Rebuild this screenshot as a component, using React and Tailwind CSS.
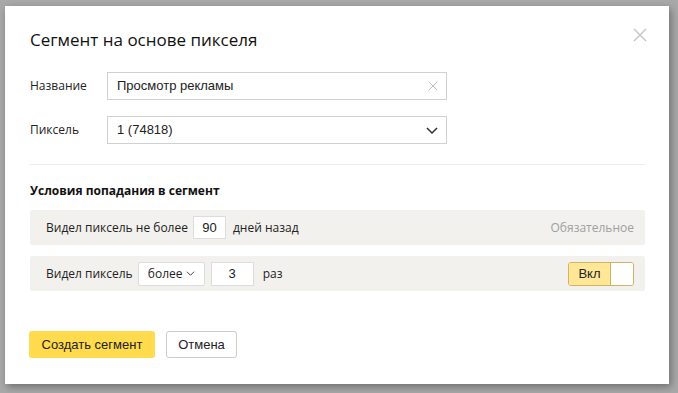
import React from "react";

const ui = { fontFamily: '"Open Sans", "Noto Sans", sans-serif' };
const ar = { fontFamily: '"Liberation Sans", Arial, sans-serif' };

function XIcon({ size = 14, color = "#bbb", sw = 1.3 }) {
  return (
    <svg width={size} height={size} viewBox="0 0 14 14">
      <path d="M1 1 L13 13 M13 1 L1 13" stroke={color} strokeWidth={sw} fill="none" />
    </svg>
  );
}

function Chevron({ w = 12, h = 7, color = "#333", sw = 1.5 }) {
  return (
    <svg width={w} height={h} viewBox="0 0 12 7">
      <path d="M1 1 L6 6 L11 1" stroke={color} strokeWidth={sw} fill="none" />
    </svg>
  );
}

export default function App() {
  return (
    <div className="w-[678px] h-[393px] bg-[#a9a9a9] pt-[6px] pl-[5px] overflow-hidden">
      <div className="w-[664px] h-[378px] bg-white shadow-[2px_3px_8px_rgba(0,0,0,0.35)] relative px-[25px] pt-[22px]" style={ui}>
        <div className="absolute right-[22px] top-[22px]">
          <XIcon size={14} color="#c4c4c4" sw={1.4} />
        </div>
        <div className="text-[17px] leading-[24px] text-[#111]">Сегмент на основе пикселя</div>

        <div className="flex items-center mt-[20px] h-[28px]">
          <div className="w-[77px] text-[12px] text-[#222]">Название</div>
          <div className="w-[340px] h-[28px] border border-[#d0d0d0] flex items-center pl-[9px] pr-[8px] text-[13px] text-[#222]" style={ar}>
            <span className="flex-1">Просмотр рекламы</span>
            <XIcon size={10} color="#b5b5b5" sw={1.2} />
          </div>
        </div>

        <div className="flex items-center mt-[16px] h-[28px]">
          <div className="w-[77px] text-[12px] text-[#222]">Пиксель</div>
          <div className="w-[340px] h-[28px] border border-[#d0d0d0] flex items-center pl-[9px] pr-[8px] text-[13px] text-[#222]" style={ar}>
            <span className="flex-1">1 (74818)</span>
            <Chevron w={12} h={7} color="#333" sw={1.5} />
          </div>
        </div>

        <div className="mt-[20px] h-px bg-[#ececec] w-[615px]" />

        <div className="mt-[17px] text-[12px] font-bold text-[#111] leading-[18px]">Условия попадания в сегмент</div>

        <div className="mt-[10px] w-[615px] h-[35px] bg-[#f2f1ee] rounded-[2px] flex items-center pl-[16px] pr-[11px] text-[12px] text-[#222]">
          <span>Видел пиксель не более</span>
          <div className="ml-[5px] w-[33px] h-[23px] bg-white border border-[#ddd] flex items-center justify-center text-[13px]" style={ar}>90</div>
          <span className="ml-[7px]">дней назад</span>
          <span className="ml-auto text-[#a0a0a0]">Обязательное</span>
        </div>

        <div className="mt-[11px] w-[615px] h-[35px] bg-[#f2f1ee] rounded-[2px] flex items-center pl-[16px] pr-[11px] text-[12px] text-[#222]">
          <span>Видел пиксель</span>
          <div className="ml-[5px] w-[67px] h-[24px] bg-white border border-[#ddd] flex items-center justify-center gap-[3px] rounded-[2px]">
            <span>более</span>
            <Chevron w={9} h={5} color="#444" sw={1.4} />
          </div>
          <div className="ml-[6px] w-[43px] h-[24px] bg-white border border-[#ddd] flex items-center justify-center text-[13px]" style={ar}>3</div>
          <span className="ml-[9px]">раз</span>
          <div className="ml-auto w-[66px] h-[24px] border border-[#d2b460] rounded-[3px] flex overflow-hidden">
            <div className="w-[42px] bg-[#ffe797] flex items-center justify-center text-[13px] text-[#222] border-r border-[#d2b460]" style={ar}>Вкл</div>
            <div className="flex-1 bg-white" />
          </div>
        </div>

        <div className="mt-[40px] flex items-center gap-[11px]" style={ar}>
          <div className="w-[126px] h-[27px] bg-[#ffdb4d] rounded-[3px] flex items-center justify-center text-[13px] text-[#222] -ml-px">Создать сегмент</div>
          <div className="w-[71px] h-[27px] bg-white border border-[#ccc] rounded-[3px] flex items-center justify-center text-[13px] text-[#222]">Отмена</div>
        </div>
      </div>
    </div>
  );
}
